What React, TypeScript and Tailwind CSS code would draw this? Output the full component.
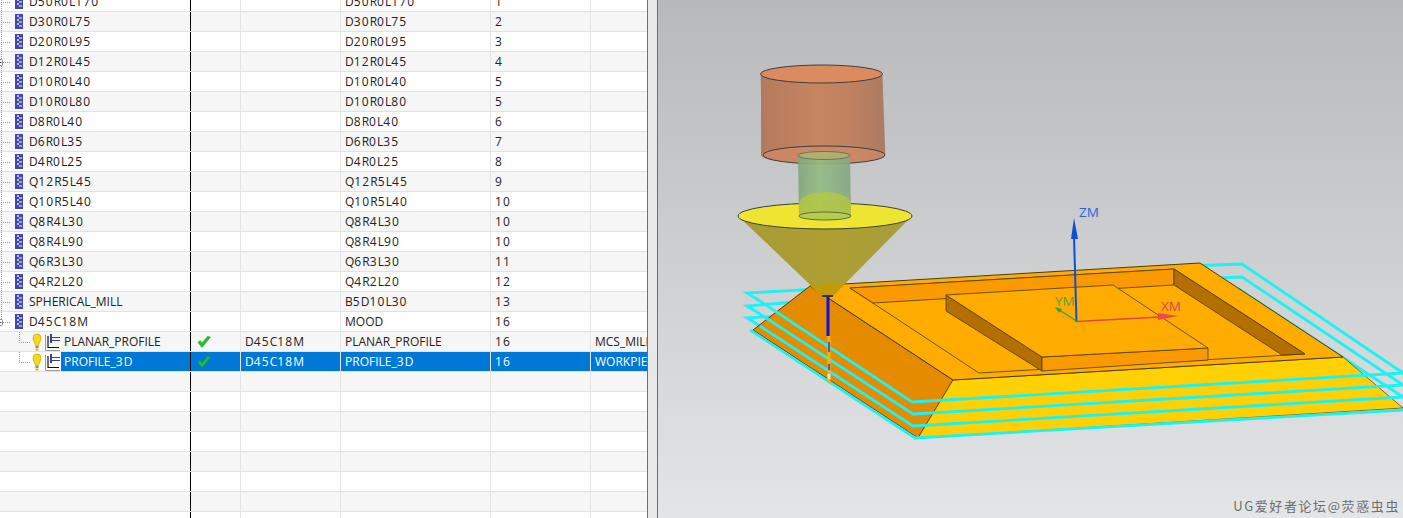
import type { ReactNode } from "react";

type Row = { name: string; tool: string; order: string; expand?: boolean };

const tools: Row[] = [
  { name: "D50R0L170", tool: "D50R0L170", order: "1" },
  { name: "D30R0L75", tool: "D30R0L75", order: "2" },
  { name: "D20R0L95", tool: "D20R0L95", order: "3" },
  { name: "D12R0L45", tool: "D12R0L45", order: "4", expand: true },
  { name: "D10R0L40", tool: "D10R0L40", order: "5" },
  { name: "D10R0L80", tool: "D10R0L80", order: "5" },
  { name: "D8R0L40", tool: "D8R0L40", order: "6" },
  { name: "D6R0L35", tool: "D6R0L35", order: "7" },
  { name: "D4R0L25", tool: "D4R0L25", order: "8" },
  { name: "Q12R5L45", tool: "Q12R5L45", order: "9" },
  { name: "Q10R5L40", tool: "Q10R5L40", order: "10" },
  { name: "Q8R4L30", tool: "Q8R4L30", order: "10" },
  { name: "Q8R4L90", tool: "Q8R4L90", order: "10" },
  { name: "Q6R3L30", tool: "Q6R3L30", order: "11" },
  { name: "Q4R2L20", tool: "Q4R2L20", order: "12" },
  { name: "SPHERICAL_MILL", tool: "B5D10L30", order: "13" },
  { name: "D45C18M", tool: "MOOD", order: "16", expand: true },
];

// the digits in the reference font are about a pixel wider than in Open Sans
function Label({ text }: { text?: string }) {
  if (!text) return null;
  return (
    <>
      {text.split(/(\d+)/).map((part, i) =>
        /\d/.test(part) ? (
          <span key={i} className="tracking-[1.1px]">
            {part}
          </span>
        ) : (
          part
        ),
      )}
    </>
  );
}

function ToolIcon() {
  return (
    <svg width="8" height="15" viewBox="0 0 8 15" className="shrink-0">
      <rect x="0" y="0" width="8" height="15" fill="#4347a6" />
      <rect x="2" y="1" width="2" height="2" fill="#b9bcec" />
      <rect x="4" y="3" width="3" height="2" fill="#9da0e0" />
      <rect x="2" y="5" width="2" height="2" fill="#b9bcec" />
      <rect x="4" y="7" width="3" height="2" fill="#9da0e0" />
      <rect x="2" y="9" width="2" height="2" fill="#b9bcec" />
      <rect x="4" y="11" width="3" height="2" fill="#9da0e0" />
    </svg>
  );
}

function ToolGuide({ expand, last }: { expand?: boolean; last?: boolean }) {
  return (
    <svg width="15" height="20" viewBox="0 0 15 20" className="shrink-0">
      <path d={last ? "M1.5 0V10" : "M1.5 0V20"} stroke="#999" strokeDasharray="1 1" />
      <path d="M3 10.5H10" stroke="#999" strokeDasharray="1 1" />
      {expand && <rect x="-2.5" y="7.5" width="5" height="6" fill="#fff" stroke="#888" rx="1" />}
      {expand && <path d="M-1 10.5H1.5" stroke="#555" />}
    </svg>
  );
}

function OpIcons() {
  return (
    <svg width="42" height="20" viewBox="0 0 42 20" className="shrink-0">
      <path d="M.5 0V10.5H11" stroke="#999" strokeDasharray="1 1" fill="none" />
      <path d="M14 6a4 4 0 0 1 8 0c0 3-2 4.500-2.400 7.500h-3.200C16 10.500 14 9 14 6z" fill="#f6d917" stroke="#c9a60f" strokeWidth=".7" />
      <rect x="16.500" y="14" width="3" height="2" fill="#8a8a8a" />
      <rect x="16.500" y="16.500" width="3" height="2" fill="#d9b814" />
      <path d="M26.500 3V18.500H41" fill="none" stroke="#9a9a9a" />
      <path d="M29 4V15.500H40" fill="none" stroke="#111" strokeWidth="1.2" />
      <rect x="31" y="2" width="2" height="9" fill="#3c3f9e" />
      <path d="M33 5.500H41M33 8.500H41" stroke="#3c3f9e" />
    </svg>
  );
}

function Check() {
  return (
    <svg width="14" height="12" viewBox="0 0 14 12">
      <path d="M1 6.500 5 11.500 13.500 1 10.500 .5 5 7 3 4.500z" fill="#22c02c" stroke="#18a823" strokeWidth=".6" strokeLinejoin="round" />
    </svg>
  );
}

function TableRow({
  first,
  check,
  method,
  tool,
  order,
  geom,
  index,
  selected,
}: {
  first: ReactNode;
  check?: boolean;
  method?: string;
  tool?: string;
  order?: string;
  geom?: string;
  index: number;
  selected?: boolean;
}) {
  const bg = selected ? "bg-[#0078d7] text-white" : "";
  const line = "border-r border-[#e4e4e4]";
  return (
    <div
      className={
        "flex h-[20px] shrink-0 items-stretch border-b border-[#e2e2e2] leading-[19px] " +
        (index % 2 === 1 ? "bg-[#f6f6f6]" : "bg-white")
      }
    >
      <div className="flex w-[191px] shrink-0 items-center overflow-hidden border-r border-black">{first}</div>
      <div className={"flex w-[50px] shrink-0 items-center pl-[6px] " + line + " " + bg}>{check && <Check />}</div>
      <div className={"w-[100px] shrink-0 truncate pl-[4px] " + line + " " + bg}>
        <Label text={method} />
      </div>
      <div className={"w-[150px] shrink-0 truncate pl-[4px] " + line + " " + bg}>
        <Label text={tool} />
      </div>
      <div className={"w-[100px] shrink-0 truncate pl-[4px] " + line + " " + bg}>
        <Label text={order} />
      </div>
      <div className={"flex-1 overflow-hidden whitespace-nowrap pl-[4px] " + bg}>{geom}</div>
    </div>
  );
}

function Viewport() {
  return (
    <svg viewBox="658 0 745 518" className="block h-full w-full">
      <defs>
        <linearGradient id="holder" x1="0" x2="1" y1="0" y2="0">
          <stop offset="0" stopColor="#b57a5e" />
          <stop offset=".45" stopColor="#c58560" />
          <stop offset=".7" stopColor="#c08260" />
          <stop offset="1" stopColor="#ac7b63" />
        </linearGradient>
        <linearGradient id="shank" x1="0" x2="1" y1="0" y2="0">
          <stop offset="0" stopColor="#83a57f" />
          <stop offset=".4" stopColor="#93bc83" />
          <stop offset="1" stopColor="#85a684" />
        </linearGradient>
        <linearGradient id="cone" x1="0" x2="1" y1="0" y2="0">
          <stop offset="0" stopColor="#a89a38" />
          <stop offset=".5" stopColor="#ad9f31" />
          <stop offset="1" stopColor="#a99d3c" />
        </linearGradient>
      </defs>

      {/* back part of the tool path */}
      <g fill="none" stroke="#19f3f5" strokeWidth="2.800">
        <path d="M810 289.500 747 293 760 301" />
        <path d="M795 302 747 306 760 314" />
        <path d="M780 316 747 318 760 326" />
        <path d="M1200 265.500 1242 264 1403 373" />
        <path d="M1218 278 1242 277 1403 385" />
        <path d="M1238 288.500 1403 397" />
      </g>

      {/* part */}
      <g stroke="#4a3c1c" strokeWidth="1" strokeLinejoin="round">
        <path d="M810 286 953 380 918 438 753 330z" fill="#e58b00" />
        <path d="M953 380 1343 357 1403 408 918 438z" fill="#ffd004" strokeWidth=".7" />
        <path d="M810 286 1200 263 1343 357 953 380z" fill="#ffac00" />
        <path d="M850 288 1174 269 1305 354 979 373z" fill="#ffac00" strokeWidth=".8" />
        <path d="M850 288 1174 269 1174 285 873 303z" fill="#fb9900" strokeWidth=".8" />
        <path d="M1174 269 1305 354 1282 355 1174 285z" fill="#b36f00" strokeWidth=".8" />
        <path d="M946 295 1042 357 1042 371 946 311z" fill="#b36f00" strokeWidth=".8" />
        <path d="M1042 357 1208 348 1208 360 1042 371z" fill="#fb9900" strokeWidth=".8" />
        <path d="M946 295 1113 285 1208 348 1042 357z" fill="#ffac00" strokeWidth=".8" />
      </g>

      {/* front part of the tool path */}
      <g fill="none" stroke="#19f3f5" strokeWidth="2.800">
        <path d="M760 301 912 402 1403 373" />
        <path d="M760 314 913 414 1403 385" />
        <path d="M760 326 913 426 1403 397" />
        <path d="M750 330 915 438 1403 410" />
      </g>

      {/* tool axis */}
      <path d="M828 297V336" stroke="#1010e0" strokeWidth="3" />
      <path d="M829 336V383" stroke="#f4b400" strokeWidth="3" />
      <path d="M829 342V352M829 364V370" stroke="#5a55c0" strokeWidth="2" />
      <path d="M829 374V379" stroke="#f0dcd8" strokeWidth="3" />

      {/* tool */}
      <g stroke="#3b3f3f" strokeWidth="1">
        <path d="M761 74V155A62 9 0 0 0 885 155L882 74z" fill="url(#holder)" stroke="none" />
        <ellipse cx="824" cy="155" rx="61" ry="9" fill="#d08a68" fillOpacity=".75" />
        <path d="M761 74 763 155M882 74 885 155" stroke="#a07a64" strokeWidth=".6" />
        <ellipse cx="821.500" cy="74" rx="61" ry="9" fill="#dc8a60" />
        <path d="M738 216 822 296H833L912 216z" fill="url(#cone)" stroke="none" />
        <path d="M810 286 829 284 845 283 833 296H822z" fill="#c29a0a" stroke="none" />
        <ellipse cx="825" cy="216" rx="87" ry="13" fill="#efe42f" />
        <path d="M798 155 799 216A26 4 0 0 0 851 216L850 155z" fill="url(#shank)" fillOpacity=".92" stroke="none" />
        <path d="M799 204V216A26 4 0 0 0 851 216V204A26 12 0 0 0 799 204z" fill="#b7c93c" fillOpacity=".75" stroke="none" />
        <ellipse cx="825" cy="216" rx="26" ry="4" fill="#b5cd4c" strokeWidth=".7" />
        <ellipse cx="824" cy="155.500" rx="26" ry="4" fill="#aeb070" strokeWidth=".5" />
        <rect x="822" y="295" width="11" height="2" fill="#3a3a2a" stroke="none" />
      </g>

      {/* axes */}
      <path d="M1076.500 322 1074 236" stroke="#0f4fd8" strokeWidth="2" />
      <path d="M1074 218 1078 239H1071z" fill="#0f4fd8" />
      <path d="M1077 321.500 1058 309" stroke="#3f9b46" strokeWidth="1.200" />
      <path d="M1055 307 1062 309 1059 313z" fill="#3f9b46" />
      <path d="M1077 321.500 1160 317" stroke="#e0474c" strokeWidth="1.600" />
      <path d="M1178 316 1158 313 1158 320z" fill="#ef4a4a" />
      <text x="1079" y="217" fontSize="13.500" fill="#2a63e6">ZM</text>
      <text x="1161" y="311" fontSize="13.500" fill="#d8484c">XM</text>
      <text x="1055" y="306" fontSize="13.500" fill="#5d9e3f">YM</text>
    </svg>
  );
}

export default function App() {
  return (
    <div className="relative flex h-[518px] w-[1403px] overflow-hidden bg-white font-['Open_Sans','Noto_Sans',sans-serif] text-[12px] text-[#222]">
      <div className="flex w-[647px] shrink-0 flex-col overflow-hidden">
        <div className="-mt-[8px] flex flex-col">
          {tools.map((r, i) => (
            <TableRow
              key={r.name + r.order}
              index={i}
              tool={r.tool}
              order={r.order}
              first={
                <>
                  <ToolGuide expand={r.expand} last={r.name === "D45C18M"} />
                  <ToolIcon />
                  <span className="pl-[6px]">
                    <Label text={r.name} />
                  </span>
                </>
              }
            />
          ))}
          <TableRow
            index={17}
            check
            method="D45C18M"
            tool="PLANAR_PROFILE"
            order="16"
            geom="MCS_MILL"
            first={
              <>
                <div className="w-[19px] shrink-0" />
                <OpIcons />
                <span className="pl-[3px]">PLANAR_PROFILE</span>
              </>
            }
          />
          <TableRow
            index={18}
            selected
            check
            method="D45C18M"
            tool="PROFILE_3D"
            order="16"
            geom="WORKPIECE"
            first={
              <>
                <div className="w-[19px] shrink-0" />
                <OpIcons />
                <span className="flex h-full flex-1 items-center bg-[#0078d7] pl-[3px] text-white">
                  <Label text="PROFILE_3D" />
                </span>
              </>
            }
          />
          {[19, 20, 21, 22, 23, 24, 25, 26].map((i) => (
            <TableRow key={i} index={i} first={null} />
          ))}
        </div>
      </div>

      <div className="w-[11px] shrink-0 border-x border-[#6f6f6f] bg-[#e8e8e8]" />

      <div className="flex-1 bg-linear-to-b from-[#b8b9ba] to-[#e4e5e6]">
        <Viewport />
      </div>

      <div className="absolute right-[3px] bottom-[3px] font-['Noto_Sans_CJK_SC',sans-serif] text-[13px] tracking-[1.6px] text-[#6e6e6e]">
        UG爱好者论坛@荧惑虫虫
      </div>
    </div>
  );
}
